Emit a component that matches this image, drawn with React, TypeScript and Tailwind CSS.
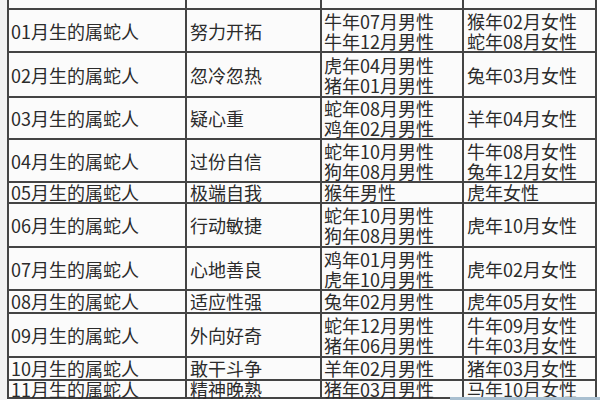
import React from "react";

type Row = { a: string; b: string; c: string[]; d: string[]; short?: boolean };

const rows: Row[] = [
  { a: "01月生的属蛇人", b: "努力开拓", c: ["牛年07月男性", "牛年12月男性"], d: ["猴年02月女性", "蛇年08月女性"] },
  { a: "02月生的属蛇人", b: "忽冷忽热", c: ["虎年04月男性", "猪年01月男性"], d: ["兔年03月女性"] },
  { a: "03月生的属蛇人", b: "疑心重", c: ["蛇年08月男性", "鸡年02月男性"], d: ["羊年04月女性"] },
  { a: "04月生的属蛇人", b: "过份自信", c: ["蛇年10月男性", "狗年08月男性"], d: ["牛年08月女性", "兔年12月女性"] },
  { a: "05月生的属蛇人", b: "极端自我", c: ["猴年男性"], d: ["虎年女性"], short: true },
  { a: "06月生的属蛇人", b: "行动敏捷", c: ["蛇年10月男性", "狗年08月男性"], d: ["虎年10月女性"] },
  { a: "07月生的属蛇人", b: "心地善良", c: ["鸡年01月男性", "虎年10月男性"], d: ["虎年02月女性"] },
  { a: "08月生的属蛇人", b: "适应性强", c: ["兔年02月男性"], d: ["虎年05月女性"], short: true },
  { a: "09月生的属蛇人", b: "外向好奇", c: ["蛇年12月男性", "猪年06月男性"], d: ["牛年09月女性", "牛年03月女性"] },
  { a: "10月生的属蛇人", b: "敢干斗争", c: ["羊年02月男性"], d: ["猪年03月女性"], short: true },
  { a: "11月生的属蛇人", b: "精神晚熟", c: ["猪年03月男性"], d: ["马年10月女性"], short: true },
];

function Cell({ lines, pl, short }: { lines: string[]; pl: string; short?: boolean }) {
  return (
    <div
      className={`bg-[#fbfbfb] flex flex-col justify-center ${pl} ${short ? "leading-[15px]" : "leading-[20px]"} whitespace-nowrap`}
    >
      {lines.map((l, i) => (
        <span key={i}>{l}</span>
      ))}
    </div>
  );
}

export default function App() {
  return (
    <div
      className="relative w-[600px] h-[400px] bg-white overflow-hidden flex text-[18px] text-[#2b2b2b]"
      style={{ fontFamily: '"Noto Sans CJK SC", "Noto Sans", sans-serif' }}
    >
      <div className="w-[7px] h-full bg-[#f2f2f2]" />
      <div className="grid grid-cols-[176px_133px_140px_131px] grid-rows-[8px_41px_43px_40px_41px_19px_42px_41px_21px_42px_21px_16px] gap-[2px] bg-[#444444] px-[2px] pb-[2px] h-[399px]">
        <div className="bg-[#fbfbfb]" />
        <div className="bg-[#fbfbfb]" />
        <div className="bg-[#fbfbfb]" />
        <div className="bg-[#fbfbfb]" />
        {rows.map((r, i) => (
          <React.Fragment key={i}>
            <Cell lines={[r.a]} pl="pl-[2px]" short={r.short} />
            <Cell lines={[r.b]} pl="pl-[3px]" short={r.short} />
            <Cell lines={r.c} pl="pl-[2px]" short={r.short} />
            <Cell lines={r.d} pl="pl-[3px]" short={r.short} />
          </React.Fragment>
        ))}
      </div>
      <div className="flex-1 bg-white" />
      <div className="absolute bottom-0 right-0 w-[150px] h-[3px] bg-[#a9bfd0]" />
    </div>
  );
}
